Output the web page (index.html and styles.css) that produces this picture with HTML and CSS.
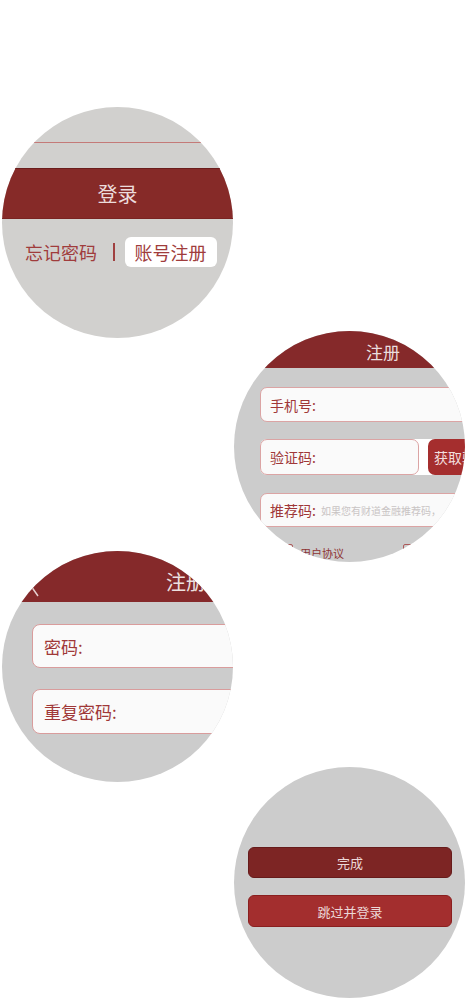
FILE: index.html
```html
<!DOCTYPE html>
<html lang="zh-CN">
<head>
    <meta charset="UTF-8">
    <meta name="viewport" content="width=device-width, initial-scale=1.0">
    <title>登录与注册</title>
    <link rel="stylesheet" href="styles.css">
</head>
<body>
    <div class="page">
        <!-- 登录 -->
        <div class="bubble bubble-left login">
            <div class="login-line"></div>
            <div class="login-btn">登录</div>
            <div class="login-links">
                <span class="link">忘记密码</span>
                <span class="sep"></span>
                <span class="link link-box">账号注册</span>
            </div>
        </div>

        <!-- 注册 第一步 -->
        <div class="bubble bubble-right reg">
            <div class="screen-small">
                <div class="reg-head">注册</div>
                <div class="reg-form">
                    <div class="field">手机号:</div>
                    <div class="code-row">
                        <div class="field">验证码:</div>
                        <div class="code-btn">获取验证码</div>
                    </div>
                    <div class="field">推荐码: <span class="hint">如果您有财道金融推荐码，</span></div>
                    <div class="terms">
                        <span class="check"></span>
                        <span class="terms-text">用户协议</span>
                        <span class="check check-2"></span>
                    </div>
                </div>
            </div>
        </div>

        <!-- 注册 第二步 -->
        <div class="bubble bubble-left pwd">
            <div class="screen-large">
                <div class="pwd-head">
                    <svg class="back" width="14" height="24" viewBox="0 0 14 24">
                        <polyline points="10,2 3,12 10,22" fill="none" stroke="#e6cfcf" stroke-width="1.5"/>
                    </svg>
                    <span class="pwd-title">注册</span>
                    <span></span>
                </div>
                <div class="pwd-form">
                    <div class="field field-lg">密码:</div>
                    <div class="field field-lg">重复密码:</div>
                </div>
            </div>
        </div>

        <!-- 完成 -->
        <div class="bubble bubble-right done">
            <div class="done-btn">完成</div>
            <div class="done-btn skip-btn">跳过并登录</div>
        </div>
    </div>
</body>
</html>
```

FILE: styles.css
```css
:root {
    --dark-red: #85292a;
    --text-red: #a03838;
    --gray: #cccccc;
}

body {
    margin: 0;
    background: #ffffff;
    font-family: 'Noto Sans CJK SC', 'Noto Sans', sans-serif;
}

.page {
    display: flex;
    flex-direction: column;
    padding-top: 107px;
}

.bubble {
    width: 231px;
    height: 231px;
    border-radius: 50%;
    overflow: hidden;
    flex-shrink: 0;
    background: var(--gray);
    box-sizing: border-box;
}

.bubble-left {
    margin-left: 2px;
}

.bubble-right {
    margin-left: 234px;
}

/* bubbles overlap a little vertically */
.reg {
    margin-top: -7px;
}

.pwd {
    margin-top: -11px;
}

.done {
    margin-top: -15px;
}

/* 登录 */
.login {
    background: #d1d0ce;
    padding-top: 35px;
}

.login-line {
    height: 1px;
    background: #c47a78;
}

.login-btn {
    margin-top: 25px;
    height: 51px;
    box-sizing: border-box;
    background: #862a28;
    border-top: 1px solid #6a1d1c;
    border-bottom: 1px solid #7a2422;
    color: #ecdcdc;
    font-size: 20px;
    display: flex;
    align-items: center;
    justify-content: center;
}

.login-links {
    margin-top: 18px;
    height: 30px;
    display: flex;
    align-items: center;
    padding-left: 23px;
    color: #a03c3c;
    font-size: 18px;
}

.sep {
    width: 1.5px;
    height: 18px;
    background: #a04040;
    margin: 0 10px 0 16px;
}

.link-box {
    background: #ffffff;
    border-radius: 6px;
    height: 30px;
    line-height: 30px;
    padding: 0 10px;
}

/* 注册 第一步 */
.screen-small {
    width: 298px;
}

.reg-head {
    height: 37px;
    box-sizing: border-box;
    padding-top: 11px;
    line-height: 20px;
    background: var(--dark-red);
    color: #eadede;
    font-size: 17px;
    text-align: center;
}

.reg-form {
    padding: 19px 26px 0;
    display: flex;
    flex-direction: column;
}

.field {
    height: 35px;
    box-sizing: border-box;
    border: 1px solid #dba4a4;
    border-radius: 7px;
    background: #fafafa;
    display: flex;
    align-items: center;
    padding-left: 9px;
    color: var(--text-red);
    font-size: 14px;
    white-space: nowrap;
}

.code-row {
    margin-top: 17px;
    height: 36px;
    display: flex;
    gap: 9px;
    background: #ffffff;
    border-radius: 7px;
}

.code-row .field {
    flex: 1;
    height: 36px;
}

.code-btn {
    width: 78px;
    border-radius: 7px;
    background: #a52e2e;
    color: #f2dede;
    font-size: 14px;
    display: flex;
    align-items: center;
    padding-left: 6px;
    box-sizing: border-box;
    white-space: nowrap;
    overflow: hidden;
}

.code-row + .field {
    margin-top: 18px;
    height: 34px;
}

.hint {
    margin-left: 5px;
    font-size: 10px;
    color: #c9c4c4;
}

.terms {
    margin-top: 17px;
    display: flex;
    align-items: flex-start;
    padding-left: 19px;
}

.check {
    width: 14px;
    height: 14px;
    box-sizing: border-box;
    border: 1px solid #ad5a5a;
    border-radius: 2px;
}

.terms-text {
    margin-left: 7px;
    font-size: 11px;
    line-height: 18px;
    color: #8e3434;
}

.check-2 {
    margin-left: 59px;
}

/* 注册 第二步 */
.screen-large {
    width: 368px;
}

.pwd-head {
    height: 51px;
    background: var(--dark-red);
    display: grid;
    grid-template-columns: 1fr auto 1fr;
    align-items: start;
    color: #ece0e0;
    font-size: 20px;
}

.back {
    margin: 23px 0 0 26px;
}

.pwd-title {
    padding-top: 18px;
    line-height: 26px;
}

.pwd-form {
    padding: 22px 30px 0;
    display: flex;
    flex-direction: column;
    gap: 21px;
}

.field-lg {
    height: 44px;
    border-radius: 8px;
    border-color: #d99c9c;
    padding-left: 11px;
    font-size: 17px;
}

.field-lg + .field-lg {
    height: 45px;
}

/* 完成 */
.done {
    padding: 80px 13px 0 14px;
    display: flex;
    flex-direction: column;
    gap: 17px;
}

.done-btn {
    height: 31px;
    box-sizing: border-box;
    border: 1px solid #661b1b;
    border-radius: 6px;
    background: #7d2524;
    color: #ecd8d8;
    font-size: 13px;
    display: flex;
    align-items: center;
    justify-content: center;
}

.skip-btn {
    height: 32px;
    background: #a32e2e;
    border-color: #8a1f1f;
}
```
